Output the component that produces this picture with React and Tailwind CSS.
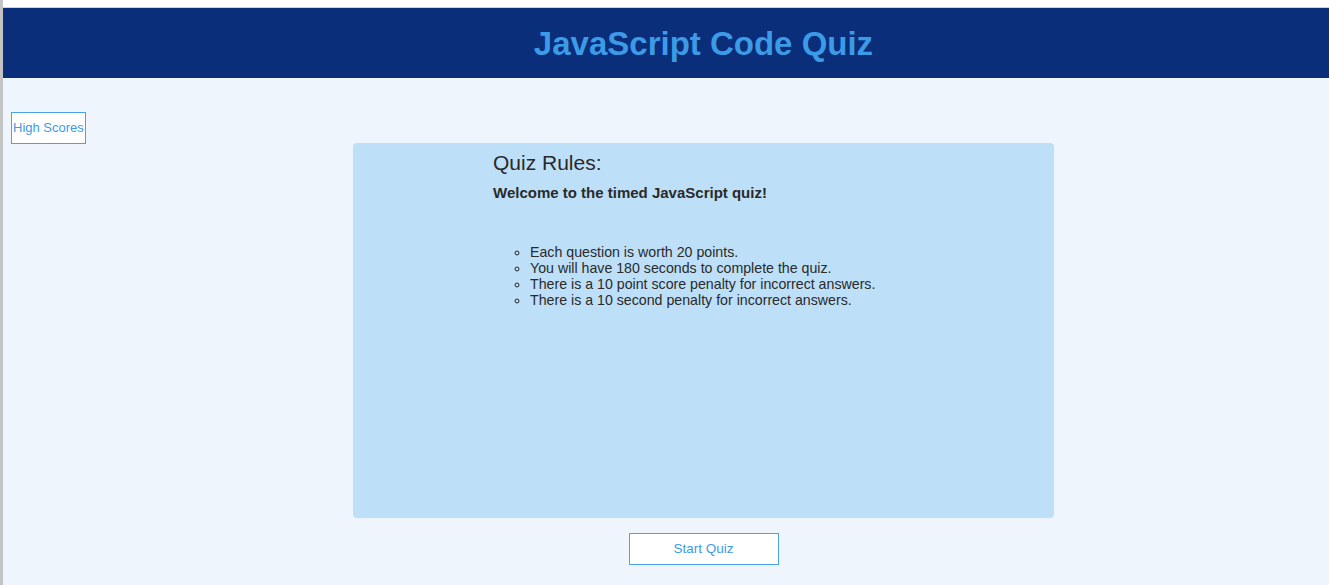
import React from "react";

export default function App() {
  const rules = [
    "Each question is worth 20 points.",
    "You will have 180 seconds to complete the quiz.",
    "There is a 10 point score penalty for incorrect answers.",
    "There is a 10 second penalty for incorrect answers.",
  ];

  return (
    <div className="min-h-[585px] bg-white flex font-['Liberation_Sans',Arial,sans-serif]">
      {/* left window edge */}
      <div className="w-[3px] bg-[#c4c4c4] shrink-0" />
      <div className="flex-1 flex flex-col">
        <div className="h-[7px] bg-white border-b border-[#d4d4d4] box-content" />
        <header className="h-[70px] bg-[#0a2e7a] flex items-center justify-center pl-[75px]">
          <h1 className="text-[33px] font-bold text-[#3c9be6] leading-none mt-[1px]">
            JavaScript Code Quiz
          </h1>
        </header>

        <main className="flex-1 bg-[#eff5fd] flex flex-col">
          <div className="pt-[34px] pl-[8px]">
            <button className="h-[32px] px-px bg-white border border-[#4aa3e8] text-[#3c9be6] text-[13px]">
              High Scores
            </button>
          </div>

          <div className="-mt-px flex flex-col items-center pl-[75px]">
            <section className="w-[701px] h-[375px] bg-[#bde0f8] rounded-[4px] pl-[140px] pt-[8px] text-[#2a2a2a]">
              <h2 className="text-[21px] leading-[24px]">Quiz Rules:</h2>
              <p className="mt-[9px] text-[15px] font-bold leading-[17px]">
                Welcome to the timed JavaScript quiz!
              </p>
              <ul className="mt-[43px] pl-[37px] list-[circle] text-[14.2px] leading-[16px]">
                {rules.map((r) => (
                  <li key={r}>{r}</li>
                ))}
              </ul>
            </section>

            <button className="mt-[15px] w-[150px] h-[32px] bg-white border border-[#4aa3e8] text-[#3c9be6] text-[13.5px]">
              Start Quiz
            </button>
          </div>
        </main>
      </div>
    </div>
  );
}
